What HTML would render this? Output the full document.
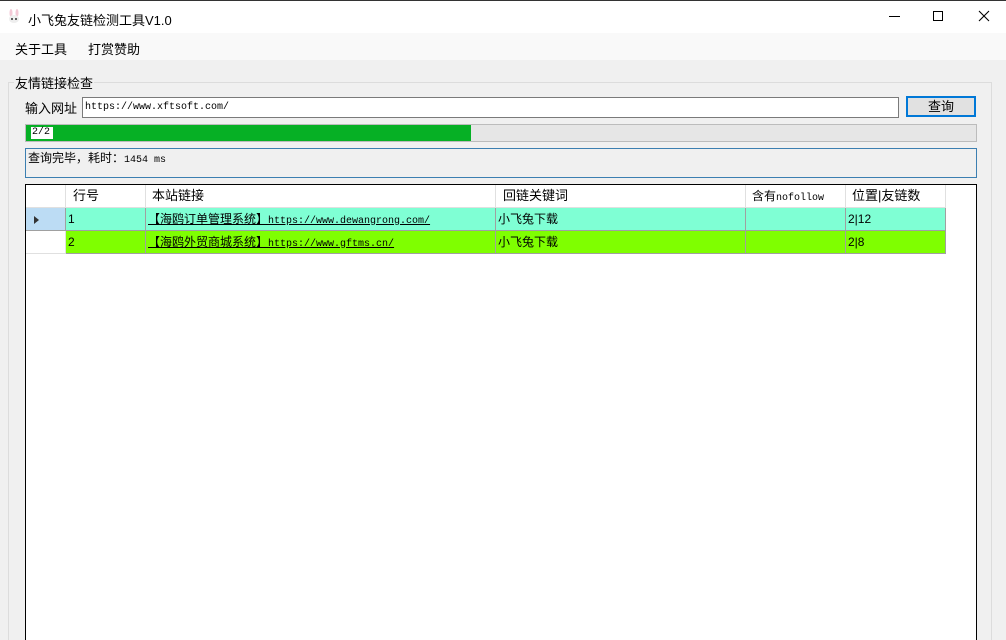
<!DOCTYPE html>
<html><head><meta charset="utf-8"><style>
*{margin:0;padding:0;box-sizing:border-box}
html,body{width:1006px;height:640px;overflow:hidden}
body{background:#f0f0f0;position:relative;font-family:"Liberation Sans","Noto Sans CJK SC",sans-serif;font-size:13px;color:#000}
.a{position:absolute}
.m{font-family:"Liberation Mono","Noto Sans CJK SC",monospace;font-size:10px}
.cell{position:absolute;height:23px;line-height:22px;border-right:1px solid #a0a0a0;border-bottom:1px solid #a0a0a0;padding-left:2px;white-space:nowrap;overflow:hidden;font-size:12px}
</style></head><body>
<div class="a" style="left:0;top:0;width:1006px;height:33px;background:#fff;border-top:1px solid #333"></div>
<svg class="a" style="left:6px;top:9px" width="16" height="14" viewBox="0 0 16 14"><ellipse cx="5" cy="4" rx="1.5" ry="4" fill="#f3c9d6"/><ellipse cx="11" cy="4" rx="1.5" ry="4" fill="#f3c9d6"/><ellipse cx="8" cy="10" rx="5" ry="4" fill="#eee"/><circle cx="6" cy="10" r="1" fill="#333"/><circle cx="10" cy="10" r="1" fill="#333"/></svg>
<div class="a" style="left:28px;top:10px;font-size:13px">小飞兔友链检测工具V1.0</div>
<div class="a" style="left:889px;top:16px;width:11px;height:1px;background:#000"></div>
<div class="a" style="left:933px;top:11px;width:10px;height:10px;border:1px solid #000"></div>
<svg class="a" style="left:978px;top:10px" width="12" height="12"><path d="M1 1L11 11M11 1L1 11" stroke="#000" stroke-width="1.1"/></svg>
<div class="a" style="left:0;top:33px;width:1006px;height:27px;background:#f9f9f9"></div>
<div class="a" style="left:15px;top:39px">关于工具</div>
<div class="a" style="left:88px;top:39px">打赏赞助</div>
<div class="a" style="left:8px;top:82px;width:984px;height:570px;border:1px solid #dcdcdc"></div>
<div class="a" style="left:14px;top:73px;background:#f0f0f0;padding:0 1px">友情链接检查</div>
<div class="a" style="left:25px;top:98px">输入网址</div>
<div class="a m" style="left:82px;top:97px;width:817px;height:21px;background:#fff;border:1px solid #7a7a7a;padding:3px 2px;line-height:13px">https://www.xftsoft.com/</div>
<div class="a" style="left:906px;top:96px;width:70px;height:21px;background:#e1e1e1;border:2px solid #0078d7;text-align:center;line-height:17px">查询</div>
<div class="a" style="left:25px;top:124px;width:952px;height:18px;background:#e6e6e6;border:1px solid #bcbcbc"></div>
<div class="a" style="left:26px;top:125px;width:445px;height:16px;background:#06b025"></div>
<div class="a m" style="left:31px;top:127px;width:22px;height:12px;background:#fff;line-height:12px;padding-left:1px">2/2</div>
<div class="a" style="left:25px;top:148px;width:952px;height:30px;border:1px solid #3c7fb1"></div>
<div class="a" style="left:28px;top:149px;font-size:12px">查询完毕，耗时：<span class="m">1454 ms</span></div>
<div class="a" style="left:25px;top:184px;width:952px;height:470px;background:#fff;border:1px solid #000"></div>
<div class="a" style="left:26px;top:185px;width:920px;height:68px">
<div class="cell" style="left:0;top:0;width:40px;background:#fff;border-color:#e0e0e0"></div>
<div class="cell" style="left:40px;top:0;width:80px;background:#fff;border-color:#e0e0e0;padding-left:7px;font-size:13px">行号</div>
<div class="cell" style="left:120px;top:0;width:350px;background:#fff;border-color:#e0e0e0;padding-left:6px;font-size:13px">本站链接</div>
<div class="cell" style="left:470px;top:0;width:250px;background:#fff;border-color:#e0e0e0;padding-left:7px;font-size:13px">回链关键词</div>
<div class="cell" style="left:720px;top:0;width:100px;background:#fff;border-color:#e0e0e0;padding-left:6px;font-size:12px">含有<span class="m">nofollow</span></div>
<div class="cell" style="left:820px;top:0;width:100px;background:#fff;border-color:#e0e0e0;padding-left:6px;font-size:13px">位置|友链数</div>
<div class="cell" style="left:0;top:23px;width:40px;background:#bcdcf4;border-color:#a0a0a0"><svg width="10" height="20" style="margin:6px 0 0 5px;display:block"><path d="M1 2L6 6L1 10Z" fill="#333"/></svg></div>
<div class="cell" style="left:40px;top:23px;width:80px;background:#7fffd4">1</div>
<div class="cell" style="left:120px;top:23px;width:350px;background:#7fffd4;text-decoration:underline">【海鸥订单管理系统】<span class="m">https://www.dewangrong.com/</span></div>
<div class="cell" style="left:470px;top:23px;width:250px;background:#7fffd4">小飞兔下载</div>
<div class="cell" style="left:720px;top:23px;width:100px;background:#7fffd4"></div>
<div class="cell" style="left:820px;top:23px;width:100px;background:#7fffd4">2|12</div>
<div class="cell" style="left:0;top:46px;width:40px;background:#fff;border-color:#e0e0e0"></div>
<div class="cell" style="left:40px;top:46px;width:80px;background:#7fff00">2</div>
<div class="cell" style="left:120px;top:46px;width:350px;background:#7fff00;text-decoration:underline">【海鸥外贸商城系统】<span class="m">https://www.gftms.cn/</span></div>
<div class="cell" style="left:470px;top:46px;width:250px;background:#7fff00">小飞兔下载</div>
<div class="cell" style="left:720px;top:46px;width:100px;background:#7fff00"></div>
<div class="cell" style="left:820px;top:46px;width:100px;background:#7fff00">2|8</div>
</div>
</body></html>
